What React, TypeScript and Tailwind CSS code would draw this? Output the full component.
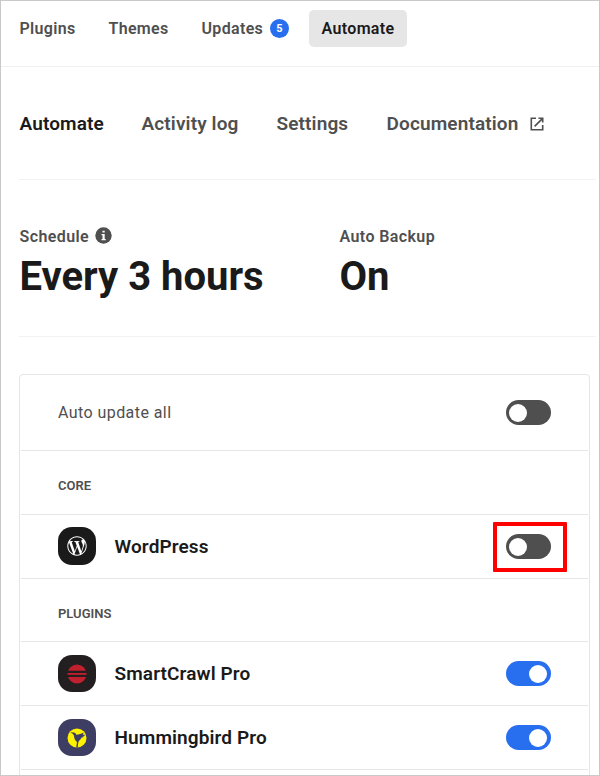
import { FaWordpressSimple } from "react-icons/fa";
import type { ReactNode } from "react";

function Toggle({ on = false }: { on?: boolean }) {
  return (
    <span
      role="switch"
      aria-checked={on}
      className={`flex h-[25px] w-[45px] items-center rounded-full ${
        on ? "justify-end bg-[#286ff0] pr-1" : "justify-start bg-[#4f4f4f] pl-[3px]"
      }`}
    >
      <span className="size-[18px] rounded-full bg-white" />
    </span>
  );
}

function InfoIcon() {
  return (
    <svg className="mb-[3px] ml-[6px] size-[17px]" viewBox="0 0 17 17">
      <circle cx="8.5" cy="8.5" r="8.2" fill="#4f4f4f" />
      <path d="M7.5 3.8h2.2v1.8H7.5zM6.5 7h3.2v5h1v1.2H6.5V12h1V8.2h-1z" fill="#fff" />
    </svg>
  );
}

function ExternalIcon() {
  return (
    <svg className="ml-3 size-[14px]" viewBox="0 0 14 14" fill="none" stroke="currentColor" strokeWidth="1.6">
      <path d="M6 1.3H1.3v11.4h11.4V8" />
      <path d="M8.5 1.3h4.2v4.2M12.4 1.6 4.6 9.4" />
    </svg>
  );
}

function Section({ title, className }: { title: string; className: string }) {
  return (
    <div className={`flex items-center border-b border-[#e6e6e6] pl-[37px] text-[13px] font-semibold text-[#4f4f4f] ${className}`}>
      {title}
    </div>
  );
}

function Item({ name, icon, color, on, marked }: { name: string; icon: ReactNode; color: string; on?: boolean; marked?: boolean }) {
  return (
    <div className="flex h-16 items-center border-b border-[#e6e6e6] pl-[37px] pr-[37px]">
      <span className={`flex w-[38px] items-center justify-center rounded-[14px] ${marked ? "mb-px h-[38px]" : "h-[37px]"} ${color}`}>{icon}</span>
      <span className="ml-[18.5px] mt-0.5 text-[19px] font-semibold tracking-[0.11px] text-[#1a1a1a]">{name}</span>
      <span className="relative ml-auto">
        <Toggle on={on} />
        {marked && <span className="absolute -left-[13px] -top-3 h-[50px] w-[74px] rounded-[1px] border-4 border-[#ff0000]" />}
      </span>
    </div>
  );
}

function CrawlLogo() {
  return (
    <svg width="20" height="20" viewBox="0 0 20 20">
      <circle cx="10" cy="10" r="9.4" fill="#c1202e" />
      <path d="M0 7.8h20M0 11.8h20" stroke="#231f20" strokeWidth="2.2" />
      <path d="M.6 9.8h18.8" stroke="#c1202e" strokeWidth="1.2" />
    </svg>
  );
}

function BirdLogo() {
  return (
    <svg width="20" height="20" viewBox="0 0 20 20">
      <circle cx="10" cy="10" r="9.5" fill="#fff200" />
      <path
        d="M3 4.2 6.5 4.5C8 4.4 8.8 5.3 9.2 6.8 12 6.6 14.4 5.9 16.8 4.6L15.7 6.6 18.6 6.9 16 8.2 17 8.9 14.6 9.5C14.3 10.8 13.4 11.4 12.3 12.5 11.3 13.7 10.9 15.6 10.8 19.4H9.2L10 14C7.9 12.4 7.2 10.5 7 7.8 6.4 6 5.3 5.2 3 4.2Z"
        fill="#3e3d63"
      />
    </svg>
  );
}

export default function App() {
  return (
    <div className="h-[776px] w-[600px] overflow-hidden border border-[#c9c9c9] bg-white font-['Roboto','Liberation_Sans',sans-serif] text-[#4f4f4f]">
      <nav className="flex h-[66px] items-start border-b border-[#f0f0f0] pl-[18.5px] pt-[9px] text-base font-semibold tracking-[0.33px]">
        <div className="flex h-[37px] items-center">
          <span className="w-[89px]">Plugins</span>
          <span className="w-[93px]">Themes</span>
          <span className="w-[68.5px]">Updates</span>
          <span className="flex size-[19px] items-center justify-center rounded-full bg-[#286ff0] pt-0.5 text-[11px] font-bold tracking-normal text-white">5</span>
          <span className="ml-5 flex h-[37px] w-[98px] items-center justify-center rounded-[5px] bg-[#e6e6e6] text-[#1a1a1a]">Automate</span>
        </div>
      </nav>

      <main className="pl-[18px]">
        <div className="mr-[3px] flex h-[113px] items-center border-b border-[#f2f2f2] pt-0.5 text-[19px] font-semibold tracking-[0.13px]">
          <span className="ml-[0.5px] w-[122px] text-[#1a1a1a]">Automate</span>
          <span className="w-[135px]">Activity log</span>
          <span className="w-[110px]">Settings</span>
          <span>Documentation</span>
          <ExternalIcon />
        </div>

        <div className="mr-[3px] flex h-[157px] border-b border-[#f2f2f2] pt-[45px]">
          <div className="w-80 pl-[0.5px]">
            <div className="flex h-6 items-center text-base font-semibold tracking-[0.4px]">
              Schedule
              <InfoIcon />
            </div>
            <div className="pt-px text-[40px] font-bold leading-[54px] text-[#1a1a1a]">Every 3 hours</div>
          </div>
          <div className="pl-[0.5px]">
            <div className="flex h-6 items-center text-base font-semibold tracking-[0.4px]">Auto Backup</div>
            <div className="pt-px text-[40px] font-bold leading-[54px] text-[#1a1a1a]">On</div>
          </div>
        </div>

        <section className="mt-[37px] h-[440px] w-[571px] rounded-[4px] border border-[#e6e6e6] px-px">
          <div className="flex h-[76px] items-center justify-between border-b border-[#e6e6e6] pl-[37px] pr-[37px] text-base tracking-[0.43px]">
            Auto update all
            <Toggle />
          </div>
          <Section title="CORE" className="h-16 pt-1.5" />
          <Item name="WordPress" color="bg-[#1a1a1a]" marked icon={<FaWordpressSimple className="size-5 text-white" />} />
          <Section title="PLUGINS" className="h-[63px] pt-2" />
          <Item name="SmartCrawl Pro" color="bg-[#231f20]" on icon={<CrawlLogo />} />
          <Item name="Hummingbird Pro" color="bg-[#3e3d63]" on icon={<BirdLogo />} />
        </section>
      </main>
    </div>
  );
}
